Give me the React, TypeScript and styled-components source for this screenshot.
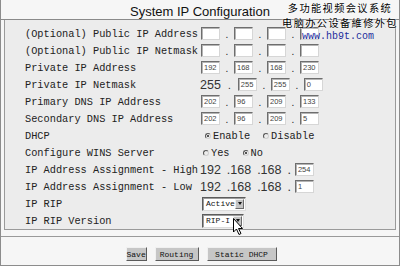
import React from 'react';
import styled, { createGlobalStyle } from 'styled-components';

const GlobalStyle = createGlobalStyle`
  body {
    margin: 0;
    background: #ffffff;
  }
`;

const Page = styled.div`
  position: relative;
  width: 400px;
  height: 266px;
  box-sizing: border-box;
  background: #f6f6f6;
  border: 1px solid #8c8c8c;
  border-top: none;
  font-family: "Liberation Mono", monospace;
`;

const Header = styled.div`
  height: 20px;
  box-sizing: border-box;
  padding-top: 4px;
  border-bottom: 1px solid #8a8a8a;
  text-align: center;
  font-family: "Liberation Sans", Arial, sans-serif;
  font-size: 13px;
  line-height: 16px;
  color: #111;
`;

const Watermark = styled.div`
  position: absolute;
  top: 0;
  left: 279px;
  width: 120px;
  text-align: center;
  font-family: "Noto Sans CJK SC", sans-serif;
  font-size: 10.2px;
  letter-spacing: 1.4px;
  line-height: 15px;
  color: #000;
  text-shadow: 0 0 2px #fff, 0 0 2px #fff;
`;

const WaterLine = styled.div`
  height: 15px;
`;

const Site = styled.div`
  position: absolute;
  top: 31px;
  left: 301px;
  font-family: "Liberation Mono", monospace;
  font-size: 10px;
  line-height: 11px;
  color: #1c2c9c;
`;

const Panel = styled.div`
  margin: 0 3px 6px 3px;
  padding: 5px 0 0 20px;
  background: #ececec;
  border: 1px solid #9a9a9a;
  border-top: none;
`;

const Row = styled.div`
  display: flex;
  align-items: center;
  height: 17px;
`;

const Label = styled.div`
  width: 175px;
  flex: none;
  font-size: 10.3px;
  color: #222;
  white-space: pre;
`;

const Value = styled.div`
  display: flex;
  align-items: center;
`;

const Box = styled.div`
  width: 19px;
  height: 13px;
  box-sizing: border-box;
  background: #fff;
  border: 1px solid;
  border-color: #6e6e6e #d6d6d6 #d6d6d6 #6e6e6e;
  box-shadow: inset 1px 1px 0 #b4b4b4;
  font-family: "Liberation Sans", sans-serif;
  font-size: 7.5px;
  line-height: 11px;
  padding-left: 2px;
  color: #444;
`;

const Dot = styled.span`
  width: 14px;
  text-align: center;
  font-family: "Liberation Sans", sans-serif;
  font-size: 10px;
  line-height: 10px;
  color: #222;
  padding-top: 3px;
`;

const Plain = styled.span<{ $ws?: number }>`
  font-family: "Liberation Sans", sans-serif;
  font-size: 12.5px;
  word-spacing: ${(p) => p.$ws ?? 0}px;
  color: #333;
  white-space: pre;
`;

const RadioDot = styled.span<{ $on?: boolean }>`
  position: relative;
  width: 6px;
  height: 6px;
  box-sizing: border-box;
  border-radius: 50%;
  border: 1px solid;
  border-color: #555 #d0d0d0 #d0d0d0 #555;
  margin: 0 2px 0 3px;
  &::after {
    content: "";
    display: ${(p) => (p.$on ? 'block' : 'none')};
    position: absolute;
    left: 1px;
    top: 1px;
    width: 2px;
    height: 2px;
    border-radius: 50%;
    background: #222;
  }
`;

const RadioText = styled.span<{ $gap?: number }>`
  font-size: 10.3px;
  color: #222;
  margin-right: ${(p) => p.$gap ?? 0}px;
`;

const SelectBox = styled.div<{ $w: number }>`
  position: relative;
  display: flex;
  align-items: center;
  width: ${(p) => p.$w}px;
  height: 14px;
  margin-left: 2px;
  box-sizing: border-box;
  background: #fff;
  border: 1px solid;
  border-color: #5c5c5c #dcdcdc #dcdcdc #5c5c5c;
  box-shadow: inset 1px 1px 0 #9c9c9c;
`;

const SelectText = styled.span`
  flex: 1;
  padding-left: 3px;
  font-size: 8px;
  color: #111;
`;

const ArrowBtn = styled.span`
  width: 9px;
  height: 10px;
  margin-right: 1px;
  background: #c4c4c4;
  border: 1px solid;
  border-color: #eee #6a6a6a #6a6a6a #eee;
  box-sizing: border-box;
  display: flex;
  align-items: center;
  justify-content: center;
  &::after {
    content: "";
    border-left: 2.5px solid transparent;
    border-right: 2.5px solid transparent;
    border-top: 3px solid #111;
  }
`;

const Cursor = styled.svg`
  position: absolute;
  left: 30px;
  top: 3px;
  width: 11px;
  height: 18px;
`;

const Footer = styled.div`
  display: flex;
  justify-content: center;
  gap: 8px;
  padding: 10px 0 0 2px;
  border-top: 1px solid #9a9a9a;
`;

const Button = styled.button<{ $w: number }>`
  width: ${(p) => p.$w}px;
  height: 14px;
  padding: 0;
  box-sizing: border-box;
  background: #c6c6c6;
  border: 1px solid;
  border-color: #f0f0f0 #5a5a5a #5a5a5a #f0f0f0;
  font-family: "Liberation Mono", monospace;
  font-size: 8px;
  color: #111;
`;

const Octets = ({ vals }: { vals: string[] }) => (
  <Value>
    {vals.map((v, i) => (
      <React.Fragment key={i}>
        {i > 0 && <Dot>.</Dot>}
        <Box style={i === 0 ? { marginLeft: 1 } : undefined}>{v}</Box>
      </React.Fragment>
    ))}
  </Value>
);

const Select = ({ w, text, cursor }: { w: number; text: string; cursor?: boolean }) => (
  <SelectBox $w={w}>
    <SelectText>{text}</SelectText>
    <ArrowBtn />
    {cursor && (
      <Cursor viewBox="0 0 11 18">
        <path d="M0.5 0.5 L0.5 14 L3.5 11 L6 16.5 L8 15.5 L5.5 10.5 L9.5 10.5 Z" fill="#fff" stroke="#000" strokeWidth="1" />
      </Cursor>
    )}
  </SelectBox>
);

export default function App() {
  return (
    <Page>
      <GlobalStyle />
      <Header>System IP Configuration</Header>
      <Watermark>
        <WaterLine>多功能视频会议系统</WaterLine>
        <WaterLine>电脑办公设备維修外包</WaterLine>
      </Watermark>
      <Site>www.hb9t.com</Site>
      <Panel>
        <Row>
          <Label>(Optional) Public IP Address</Label>
          <Octets vals={['', '', '', '']} />
        </Row>
        <Row>
          <Label>(Optional) Public IP Netmask</Label>
          <Octets vals={['', '', '', '']} />
        </Row>
        <Row>
          <Label>Private IP Address</Label>
          <Octets vals={['192', '168', '168', '230']} />
        </Row>
        <Row>
          <Label>Private IP Netmask</Label>
          <Value>
            <Plain>255</Plain>
            <Dot style={{ width: 17 }}>.</Dot>
            <Box>255</Box>
            <Dot>.</Dot>
            <Box>255</Box>
            <Dot>.</Dot>
            <Box>0</Box>
          </Value>
        </Row>
        <Row>
          <Label>Primary DNS IP Address</Label>
          <Octets vals={['202', '96', '209', '133']} />
        </Row>
        <Row>
          <Label>Secondary DNS IP Address</Label>
          <Octets vals={['202', '96', '209', '5']} />
        </Row>
        <Row>
          <Label>DHCP</Label>
          <Value>
            <RadioDot $on style={{ marginLeft: 5 }} />
            <RadioText $gap={10}>Enable</RadioText>
            <RadioDot />
            <RadioText>Disable</RadioText>
          </Value>
        </Row>
        <Row>
          <Label>Configure WINS Server</Label>
          <Value>
            <RadioDot />
            <RadioText $gap={10}>Yes</RadioText>
            <RadioDot $on />
            <RadioText>No</RadioText>
          </Value>
        </Row>
        <Row>
          <Label>IP Address Assignment - High</Label>
          <Value>
            <Plain $ws={2.5}>192 .168 .168 .</Plain>
            <Box style={{ marginLeft: 4 }}>254</Box>
          </Value>
        </Row>
        <Row>
          <Label>IP Address Assignment - Low</Label>
          <Value>
            <Plain $ws={2.5}>192 .168 .168 .</Plain>
            <Box style={{ marginLeft: 4 }}>1</Box>
          </Value>
        </Row>
        <Row>
          <Label>IP RIP</Label>
          <Select w={44} text="Active" />
        </Row>
        <Row>
          <Label>IP RIP Version</Label>
          <Select w={42} text="RIP-I" cursor />
        </Row>
      </Panel>
      <Footer>
        <Button $w={21}>Save</Button>
        <Button $w={44}>Routing</Button>
        <Button $w={70}>Static DHCP</Button>
      </Footer>
    </Page>
  );
}
